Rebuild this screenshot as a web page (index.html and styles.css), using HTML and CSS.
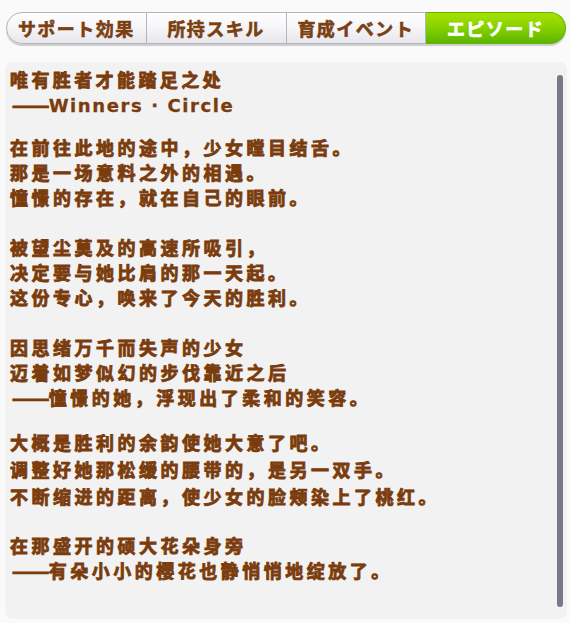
FILE: index.html
```html
<!DOCTYPE html>
<html lang="zh">
<head>
<meta charset="utf-8">
<link rel="stylesheet" href="styles.css">
</head>
<body>
<div class="tabs">
  <div class="tab first">サポート効果</div>
  <div class="tab">所持スキル</div>
  <div class="tab">育成イベント</div>
  <div class="tab active">エピソード</div>
</div>
<div class="panel">
  <div class="content">
    <div class="para title">唯有胜者才能踏足之处<br><span class="dash">——</span><span class="latin">Winners · Circle</span></div>
    <div class="para">在前往此地的途中，少女瞠目结舌。<br>那是一场意料之外的相遇。<br>憧憬的存在，就在自己的眼前。</div>
    <div class="para">被望尘莫及的高速所吸引，<br>决定要与她比肩的那一天起。<br>这份专心，唤来了今天的胜利。</div>
    <div class="para p3">因思绪万千而失声的少女<br>迈着如梦似幻的步伐靠近之后<br><span class="dash">——</span>憧憬的她，浮现出了柔和的笑容。</div>
    <div class="para p4">大概是胜利的余韵使她大意了吧。<br>调整好她那松缓的腰带的，是另一双手。<br>不断缩进的距离，使少女的脸颊染上了桃红。</div>
    <div class="para">在那盛开的硕大花朵身旁<br><span class="dash">——</span>有朵小小的樱花也静悄悄地绽放了。</div>
  </div>
  <div class="scrollbar"></div>
</div>
</body>
</html>
```

FILE: styles.css
```css
html, body {
  margin: 0;
  padding: 0;
  background: #fafafa;
}
body {
  width: 570px;
  height: 623px;
  overflow: hidden;
  font-family: "Noto Sans CJK SC", "Noto Sans CJK JP", sans-serif;
}
.tabs {
  display: flex;
  margin: 12px 4px 0 6px;
  height: 32px;
  border-radius: 16px;
  box-shadow: 0 2px 1px rgba(0,0,0,0.18);
}
.tab {
  flex: 1;
  display: flex;
  align-items: center;
  justify-content: center;
  background: linear-gradient(#ffffff, #f4f4f7 55%, #e6e6ec);
  border: 1px solid #b4b4bc;
  border-left: none;
  color: #7a3f12;
  font-weight: 700;
  font-size: 18px;
  letter-spacing: 1.5px;
  -webkit-text-stroke: 0.6px #7a3f12;
  box-sizing: border-box;
}
.tab.first {
  border-left: 1px solid #b4b4bc;
  border-radius: 16px 0 0 16px;
}
.tab.active {
  background: linear-gradient(#a6e200, #86d000 50%, #5bb600);
  border-color: #62b400;
  color: #ffffff;
  -webkit-text-stroke: 0.6px #ffffff;
  border-radius: 0 16px 16px 0;
}
.panel {
  display: flex;
  margin: 18px 3px 0 5px;
  height: 557px;
  background: #f2f2f2;
  border-radius: 8px;
}
.content {
  flex: 1;
  padding: 5px 0 0 5px;
  color: #7a3c0c;
  font-weight: 700;
  font-size: 18px;
  line-height: 25px;
  letter-spacing: 3.5px;
  -webkit-text-stroke: 0.85px #7a3c0c;
}
.para {
  margin-bottom: 25px;
}
.para.title {
  margin-bottom: 17px;
  letter-spacing: 3.4px;
}
.para.p3 {
  margin-bottom: 19px;
}
.para.p4 {
  line-height: 27px;
  margin-bottom: 23px;
}
.dash {
  display: inline-block;
  letter-spacing: 0;
  transform: scaleX(1.22);
  transform-origin: left center;
  margin-left: 2px;
  margin-right: 6px;
  -webkit-text-stroke: 1.2px #7a3c0c;
}
.latin {
  font-family: "DejaVu Sans", sans-serif;
  letter-spacing: 1.6px;
  -webkit-text-stroke: 0.3px #7a3c0c;
}
.scrollbar {
  width: 6px;
  margin: 13px 4px 12px 0;
  background: #7b778a;
  border-radius: 3px;
}
```
